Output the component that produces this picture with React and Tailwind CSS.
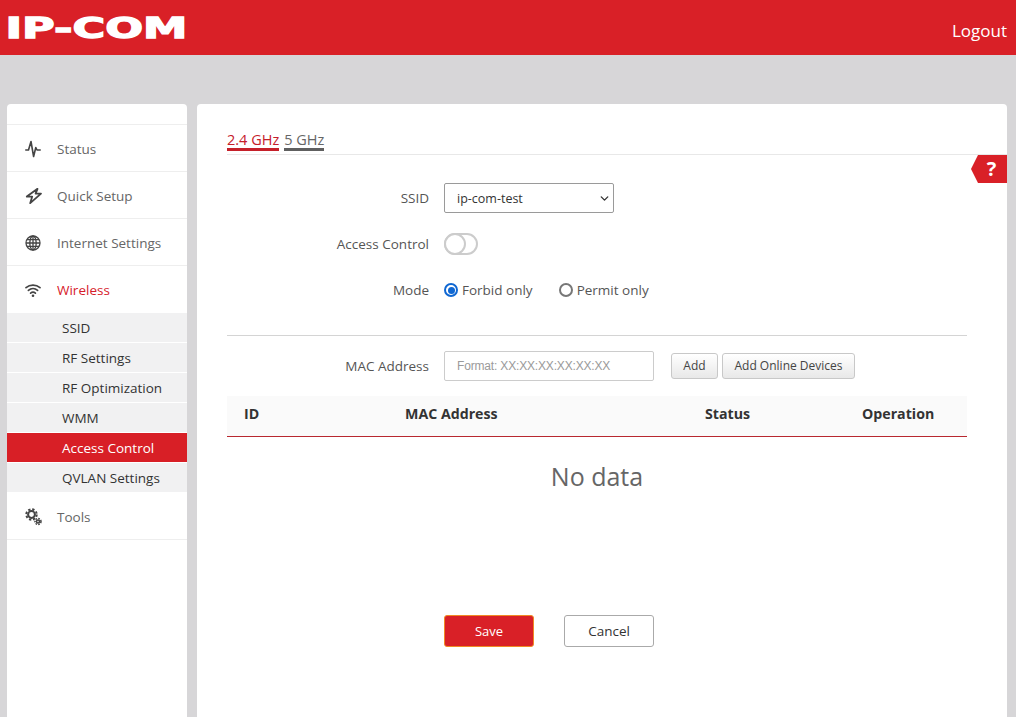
import React from "react";
import { ChevronDown } from "lucide-react";

const FONT = "font-['Open_Sans','Noto_Sans',sans-serif]";

function Logo() {
  return (
    <svg width="200" height="44" viewBox="0 0 200 44" className="block" role="img" aria-label="IP-COM">
      <text x="5.5" y="32" fill="#fff" stroke="#fff" strokeWidth="1.3" textLength="182" lengthAdjust="spacingAndGlyphs"
        style={{ fontFamily: "'DejaVu Sans', sans-serif", fontWeight: 700, fontSize: 29 }}>IP-COM</text>
    </svg>
  );
}

const StatusIcon = () => (
  <svg width="16" height="18" viewBox="0 0 16 18" fill="none" stroke="#444" strokeWidth="1.6" strokeLinejoin="round" strokeLinecap="round">
    <path d="M0.8 10h2.7L6 1.5l2.6 15 2.2-9 1.2 2.5h3.2" />
  </svg>
);
const ZapIcon = () => (
  <svg width="18" height="18" viewBox="0 0 18 18" fill="none" stroke="#444" strokeWidth="1.8" strokeLinejoin="round">
    <path d="M12.5 1.8 1.8 9.6h5.4L5.2 16.2 16 6.6h-5.4z" />
  </svg>
);
const GlobeIcon = () => (
  <svg width="16" height="16" viewBox="0 0 16 16" fill="none" stroke="#444" strokeWidth="1.3">
    <circle cx="8" cy="8" r="7" />
    <ellipse cx="8" cy="8" rx="3.2" ry="7" />
    <path d="M8 1v14M1 8h14M2 4.6h12M2 11.4h12" />
  </svg>
);
const WifiIcon = () => (
  <svg width="16" height="16" viewBox="0 0 16 16" fill="none" stroke="#444" strokeWidth="1.7" strokeLinecap="round">
    <path d="M1 4.6c4-3.4 10-3.4 14 0" />
    <path d="M3.4 7.4c2.7-2.3 6.5-2.3 9.2 0" />
    <path d="M5.6 10.1c1.4-1.1 3.4-1.1 4.8 0" />
    <circle cx="8" cy="12.8" r="1.3" fill="#444" stroke="none" />
  </svg>
);
const GearsIcon = () => (
  <svg width="17" height="18" viewBox="0 0 17 18" fill="none" stroke="#444">
    <circle cx="6.5" cy="6.5" r="3.4" strokeWidth="2" />
    <circle cx="6.5" cy="6.5" r="5.2" strokeWidth="2" strokeDasharray="2.3 1.8" />
    <circle cx="13" cy="13.5" r="1.5" strokeWidth="1.6" />
    <circle cx="13" cy="13.5" r="3" strokeWidth="1.5" strokeDasharray="1.6 1.2" />
  </svg>
);

function NavItem({ icon, label, active, className = "" }) {
  return (
    <div className={`flex h-[47px] items-center border-b border-[#eeeeee] pl-[18px] pt-[2px] ${className}`}>
      <span className="flex w-[32px] items-center">{icon}</span>
      <span className={`text-[13.5px] ${active ? "text-[#d6202a]" : "text-[#666]"}`}>{label}</span>
    </div>
  );
}

function SubItem({ label, active }) {
  return (
    <div className={`flex h-[30px] items-center border-b border-white pl-[55px] pt-[2px] text-[13.5px] ${active ? "bg-[#d81f26] text-white" : "bg-[#f1f1f2] text-[#333]"}`}>
      {label}
    </div>
  );
}

function Row({ label, children, className = "" }) {
  return (
    <div className={`flex items-center ${className}`}>
      <label className="w-[202px] text-right text-[13.5px] text-[#555]">{label}</label>
      <div className="ml-[15px] flex items-center">{children}</div>
    </div>
  );
}

function Radio({ checked, label, className = "" }) {
  return (
    <span className={`flex items-center text-[13.5px] text-[#555] ${className}`}>
      <span className={`mr-[4px] flex h-[14px] w-[14px] items-center justify-center rounded-full border-2 bg-white ${checked ? "border-[#0f67d2]" : "border-[#777777]"}`}>
        {checked && <span className="h-[7px] w-[7px] rounded-full bg-[#0f67d2]" />}
      </span>
      {label}
    </span>
  );
}

export default function App() {
  return (
    <div className={`h-[717px] overflow-hidden bg-[#d7d6d8] ${FONT}`}>
      <header className="flex h-[55px] items-center justify-between bg-[#d92027] pr-[9px]">
        <Logo />
        <a className="mt-[6px] text-[17px] text-white">Logout</a>
      </header>

      <div className="flex items-start gap-[10px] px-[7px] pt-[49px]">
        <aside className="h-[620px] w-[180px] rounded-t-[4px] bg-white pt-[20px]">
          <div className="border-t border-[#eeeeee]">
            <NavItem label="Status" icon={<StatusIcon />} />
            <NavItem label="Quick Setup" icon={<ZapIcon />} />
            <NavItem label="Internet Settings" icon={<GlobeIcon />} />
            <NavItem label="Wireless" active icon={<WifiIcon />} className="border-b-0" />
            <SubItem label="SSID" />
            <SubItem label="RF Settings" />
            <SubItem label="RF Optimization" />
            <SubItem label="WMM" />
            <SubItem label="Access Control" active />
            <SubItem label="QVLAN Settings" />
            <NavItem label="Tools" icon={<GearsIcon />} />
          </div>
        </aside>

        <main className="relative h-[620px] w-[810px] rounded-t-[4px] bg-white pl-[30px] pr-[40px]">
          <div className="-mr-[40px] flex h-[51px] items-end gap-[5px] border-b border-[#e8e8e8] pb-[3px] text-[14.5px]">
            <span className="border-b-[3px] border-[#c5202a] leading-[16px] text-[#c5202a]">2.4 GHz</span>
            <span className="border-b-[3px] border-[#5f5f5f] leading-[16px] text-[#666]">5 GHz</span>
          </div>

          <div className="absolute right-0 top-[51px] flex h-[28px] w-[36px] items-center justify-center bg-[#d92027] pl-[5px] text-[20px] font-bold leading-none text-white [clip-path:polygon(0_50%,7px_0,100%_0,100%_100%,7px_100%)]">
            ?
          </div>

          <Row label="SSID" className="mt-[28px]">
            <span className="relative block">
              <select defaultValue="ip-com-test" className="block h-[30px] w-[170px] appearance-none rounded-[2px] border border-[#9a9a9a] bg-white pl-[12px] pt-[2px] text-[12.5px] text-[#333]">
                <option>ip-com-test</option>
              </select>
              <ChevronDown size={13} strokeWidth={2.5} className="pointer-events-none absolute right-[3px] top-[9px] text-[#333]" />
            </span>
          </Row>

          <Row label="Access Control" className="mt-[20px]">
            <span className="relative block h-[22px] w-[34px] rounded-full border-2 border-[#cccccc] bg-white">
              <span className="absolute -left-[2px] -top-[2px] h-[22px] w-[22px] rounded-full border-2 border-[#cccccc] bg-white" />
            </span>
          </Row>

          <Row label="Mode" className="mt-[25px]">
            <Radio checked label="Forbid only" />
            <Radio label="Permit only" className="ml-[26px]" />
          </Row>

          <div className="mt-[35px] border-t border-[#d4d4d4]" />

          <Row label="MAC Address" className="mt-[15px]">
            <input placeholder="Format: XX:XX:XX:XX:XX:XX" className="h-[30px] w-[210px] rounded-[2px] border border-[#cccccc] pl-[12px] font-['Liberation_Sans',sans-serif] text-[12px] tracking-[-0.17px] placeholder:text-[#9a9a9a]" />
            <button className="ml-[17px] h-[26px] w-[47px] rounded-[3px] border border-[#c8c8c8] bg-gradient-to-b from-[#ffffff] to-[#e8e8e8] text-[12px] text-[#444]">Add</button>
            <button className="ml-[4px] h-[26px] w-[133px] rounded-[3px] border border-[#c8c8c8] bg-gradient-to-b from-[#ffffff] to-[#e8e8e8] text-[12px] text-[#444]">Add Online Devices</button>
          </Row>

          <div className="mt-[15px] flex h-[41px] items-center border-b border-[#b8282f] bg-[#fafafa] pb-[6px] pl-[17px] text-[14.2px] font-bold text-[#333]">
            <span className="w-[161px]">ID</span>
            <span className="w-[300px]">MAC Address</span>
            <span className="w-[157px]">Status</span>
            <span>Operation</span>
          </div>

          <div className="mt-[21px] text-center text-[25px] leading-[36px] text-[#666]">No data</div>

          <div className="mt-[121px] flex pl-[217px]">
            <button className="h-[32px] w-[90px] rounded-[3px] border border-[#f08a24] bg-[#d92027] text-[13px] text-white">Save</button>
            <button className="ml-[30px] h-[32px] w-[90px] rounded-[3px] border border-[#aaaaaa] bg-white text-[13.5px] text-[#333]">Cancel</button>
          </div>
        </main>
      </div>
    </div>
  );
}
